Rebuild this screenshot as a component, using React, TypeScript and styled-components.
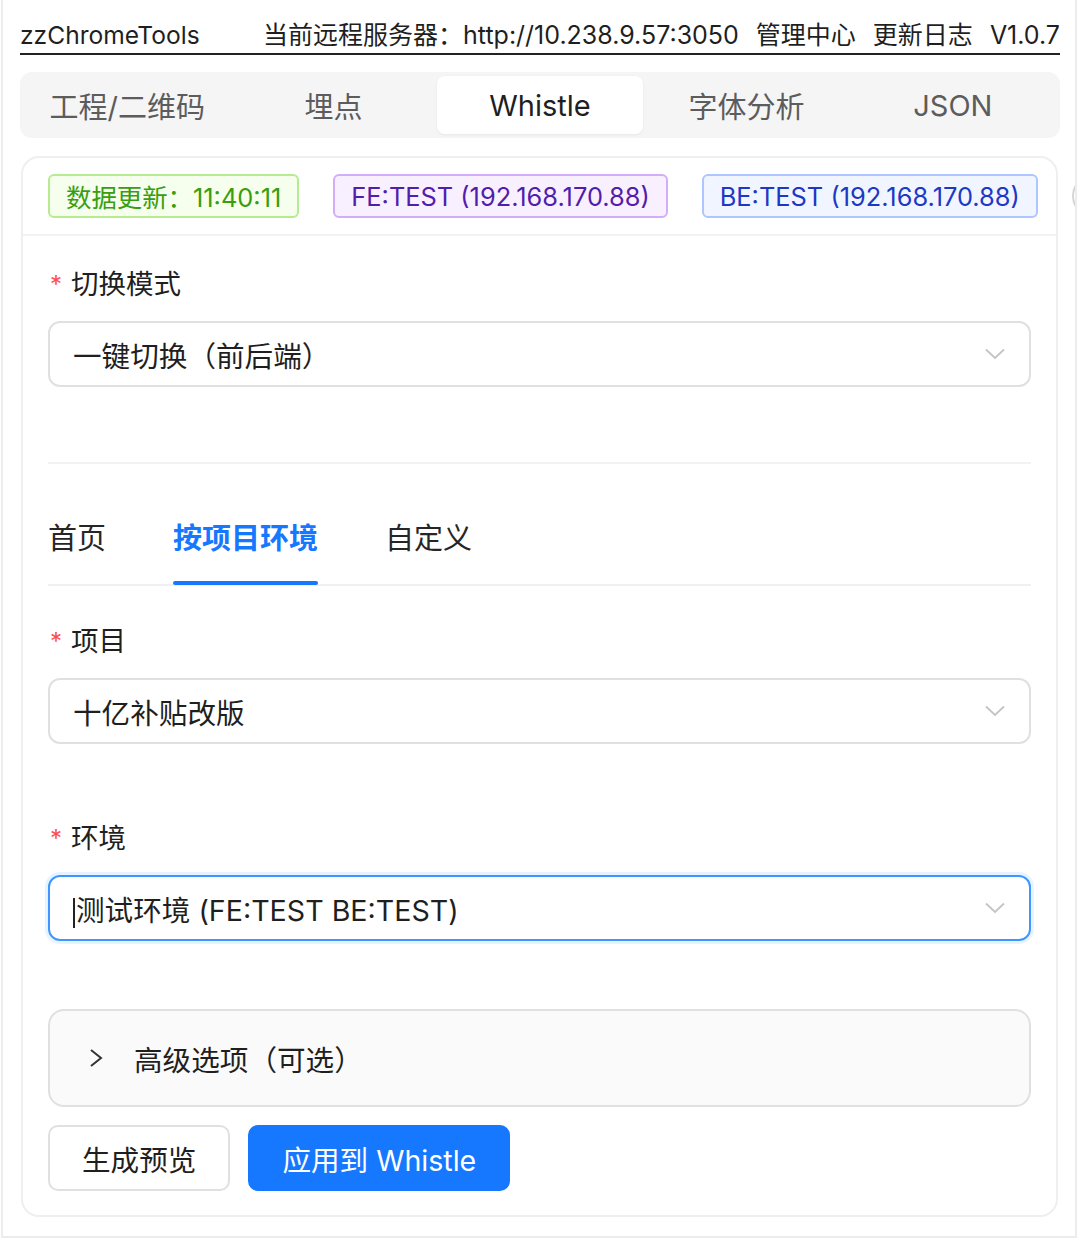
import React from 'react';
import styled, { createGlobalStyle } from 'styled-components';

const GlobalStyle = createGlobalStyle`
	html, body {
		margin: 0;
		padding: 0;
		background: #fff;
	}
	body {
		font-family: Inter, "Noto Sans CJK SC", "Noto Sans", sans-serif;
		color: #1f1f1f;
	}
	* {
		box-sizing: border-box;
	}
`;

const Frame = styled.div`
	width: 1076px;
	height: 1238px;
	margin-left: 1px;
	padding: 0 15px 0 17px;
	border: 2px solid #ececec;
	border-top: none;
	overflow: hidden;
`;

const Header = styled.header`
	display: flex;
	justify-content: space-between;
	align-items: center;
	padding-top: 19px;
	padding-bottom: 2px;
	border-bottom: 2px solid #222;
	font-size: 25px;
	line-height: 32px;
	color: #1f1f1f;

	.brand {
		font-size: 24.6px;
	}

	nav {
		display: flex;
		gap: 17px;
	}
`;

const Segmented = styled.div`
	display: flex;
	margin-top: 17px;
	padding: 4px;
	height: 66px;
	background: #f5f5f5;
	border-radius: 12px;
`;

const SegItem = styled.div<{ $active?: boolean }>`
	flex: 1;
	display: flex;
	align-items: center;
	justify-content: center;
	border-radius: 8px;
	font-size: 29px;
	color: ${(p) => (p.$active ? '#1f1f1f' : '#5c5c5c')};
	background: ${(p) => (p.$active ? '#fff' : 'transparent')};
	box-shadow: ${(p) => (p.$active ? '0 1px 3px rgba(0,0,0,0.06)' : 'none')};
`;

const Card = styled.section`
	margin: 18px 2px 0 1px;
	border: 2px solid #efefef;
	border-radius: 18px;
	padding-bottom: 24px;
`;

const TagRow = styled.div`
	display: flex;
	align-items: center;
	gap: 34px;
	padding: 16px 0 16px 25px;
	border-bottom: 2px solid #f2f2f2;
	white-space: nowrap;
`;

const tagColors = {
	green: { fg: '#389e0d', bg: '#f6ffed', bd: '#b7eb8f' },
	purple: { fg: '#531dab', bg: '#f9f0ff', bd: '#d3adf7' },
	blue: { fg: '#1d39c4', bg: '#f0f5ff', bd: '#adc6ff' },
};

const Tag = styled.span<{ $color: keyof typeof tagColors }>`
	display: inline-flex;
	align-items: center;
	height: 44px;
	padding: 0 16px;
	font-size: 25.4px;
	border-radius: 6px;
	color: ${(p) => tagColors[p.$color].fg};
	background: ${(p) => tagColors[p.$color].bg};
	border: 2px solid ${(p) => tagColors[p.$color].bd};
`;

const RoundButton = styled.span`
	flex: 0 0 44px;
	height: 44px;
	border-radius: 50%;
	border: 2px solid #d4d4d4;
`;

const Body = styled.div`
	padding: 0 25px;
`;

const FormItem = styled.div<{ $top: number }>`
	margin-top: ${(p) => p.$top}px;
`;

const Label = styled.div`
	display: flex;
	align-items: center;
	height: 36px;
	margin-bottom: 21px;
	font-size: 27.5px;
	color: #1f1f1f;

	em {
		font-style: normal;
		color: #ff4d4f;
		font-size: 24px;
		margin: 4px 9px 0 2px;
	}
`;

const Select = styled.div<{ $focused?: boolean }>`
	display: flex;
	align-items: center;
	justify-content: space-between;
	height: 66px;
	padding: 0 24px 0 23px;
	border-radius: 12px;
	font-size: 28.6px;
	color: #1f1f1f;
	border: 2px solid ${(p) => (p.$focused ? '#4096ff' : '#e0e0e0')};
	box-shadow: ${(p) => (p.$focused ? '0 0 0 3px rgba(5, 145, 255, 0.1)' : 'none')};
`;

const Caret = styled.span`
	display: inline-block;
	width: 2px;
	height: 30px;
	margin-right: 1px;
	background: #222;
	vertical-align: middle;
`;

const Divider = styled.div`
	margin-top: 75px;
	height: 2px;
	background: #f2f2f2;
`;

const TabNav = styled.div`
	display: flex;
	gap: 67px;
	margin-top: 26px;
	border-bottom: 2px solid #f0f0f0;
`;

const Tab = styled.div<{ $active?: boolean }>`
	position: relative;
	padding: 29px 0 25px;
	line-height: 40px;
	font-size: 29px;
	font-weight: ${(p) => (p.$active ? 600 : 400)};
	color: ${(p) => (p.$active ? '#1677ff' : '#262626')};

	&::after {
		content: '';
		display: ${(p) => (p.$active ? 'block' : 'none')};
		position: absolute;
		left: 0;
		right: 0;
		bottom: -1px;
		height: 4px;
		border-radius: 2px;
		background: #1677ff;
	}
`;

const Collapse = styled.div`
	display: flex;
	align-items: center;
	gap: 31px;
	margin-top: 68px;
	height: 98px;
	padding-left: 39px;
	background: #fafafa;
	border: 2px solid #e0e0e0;
	border-radius: 16px;
	font-size: 28.6px;
	color: #1f1f1f;
`;

const Actions = styled.div`
	display: flex;
	gap: 18px;
	margin-top: 18px;
`;

const Button = styled.button<{ $primary?: boolean }>`
	height: 66px;
	padding: 0 32px;
	border-radius: 10px;
	font-family: inherit;
	font-size: 28.6px;
	color: ${(p) => (p.$primary ? '#fff' : '#1f1f1f')};
	background: ${(p) => (p.$primary ? '#1677ff' : '#fff')};
	border: 2px solid ${(p) => (p.$primary ? '#1677ff' : '#e0e0e0')};
`;

const Chevron = () => (
	<svg width="20" height="12" viewBox="0 0 20 12" fill="none">
		<polyline points="1,1.5 10,10 19,1.5" stroke="#c4c4c4" strokeWidth="1.8" />
	</svg>
);

const ArrowRight = () => (
	<svg width="14" height="20" viewBox="0 0 14 20" fill="none">
		<polyline points="2,2 12,10 2,18" stroke="#333" strokeWidth="2" />
	</svg>
);

const segments = ['工程/二维码', '埋点', 'Whistle', '字体分析', 'JSON'];

export default function App() {
	return (
		<>
			<GlobalStyle />
			<Frame>
				<Header>
					<span className="brand">zzChromeTools</span>
					<nav>
						<span>当前远程服务器：http://10.238.9.57:3050</span>
						<span>管理中心</span>
						<span>更新日志</span>
						<span>V1.0.7</span>
					</nav>
				</Header>
				<Segmented>
					{segments.map((s) => (
						<SegItem key={s} $active={s === 'Whistle'}>
							{s}
						</SegItem>
					))}
				</Segmented>
				<Card>
					<TagRow>
						<Tag $color="green">数据更新：11:40:11</Tag>
						<Tag $color="purple">FE:TEST (192.168.170.88)</Tag>
						<Tag $color="blue">BE:TEST (192.168.170.88)</Tag>
						<RoundButton />
					</TagRow>
					<Body>
						<FormItem $top={28}>
							<Label>
								<em>*</em>切换模式
							</Label>
							<Select>
								<span>一键切换（前后端）</span>
								<Chevron />
							</Select>
						</FormItem>
						<Divider />
						<TabNav>
							<Tab>首页</Tab>
							<Tab $active>按项目环境</Tab>
							<Tab>自定义</Tab>
						</TabNav>
						<FormItem $top={35}>
							<Label>
								<em>*</em>项目
							</Label>
							<Select>
								<span>十亿补贴改版</span>
								<Chevron />
							</Select>
						</FormItem>
						<FormItem $top={74}>
							<Label>
								<em>*</em>环境
							</Label>
							<Select $focused>
								<span>
									<Caret />
									测试环境 (FE:TEST BE:TEST)
								</span>
								<Chevron />
							</Select>
						</FormItem>
						<Collapse>
							<ArrowRight />
							<span>高级选项（可选）</span>
						</Collapse>
						<Actions>
							<Button>生成预览</Button>
							<Button $primary>应用到 Whistle</Button>
						</Actions>
					</Body>
				</Card>
			</Frame>
		</>
	);
}
